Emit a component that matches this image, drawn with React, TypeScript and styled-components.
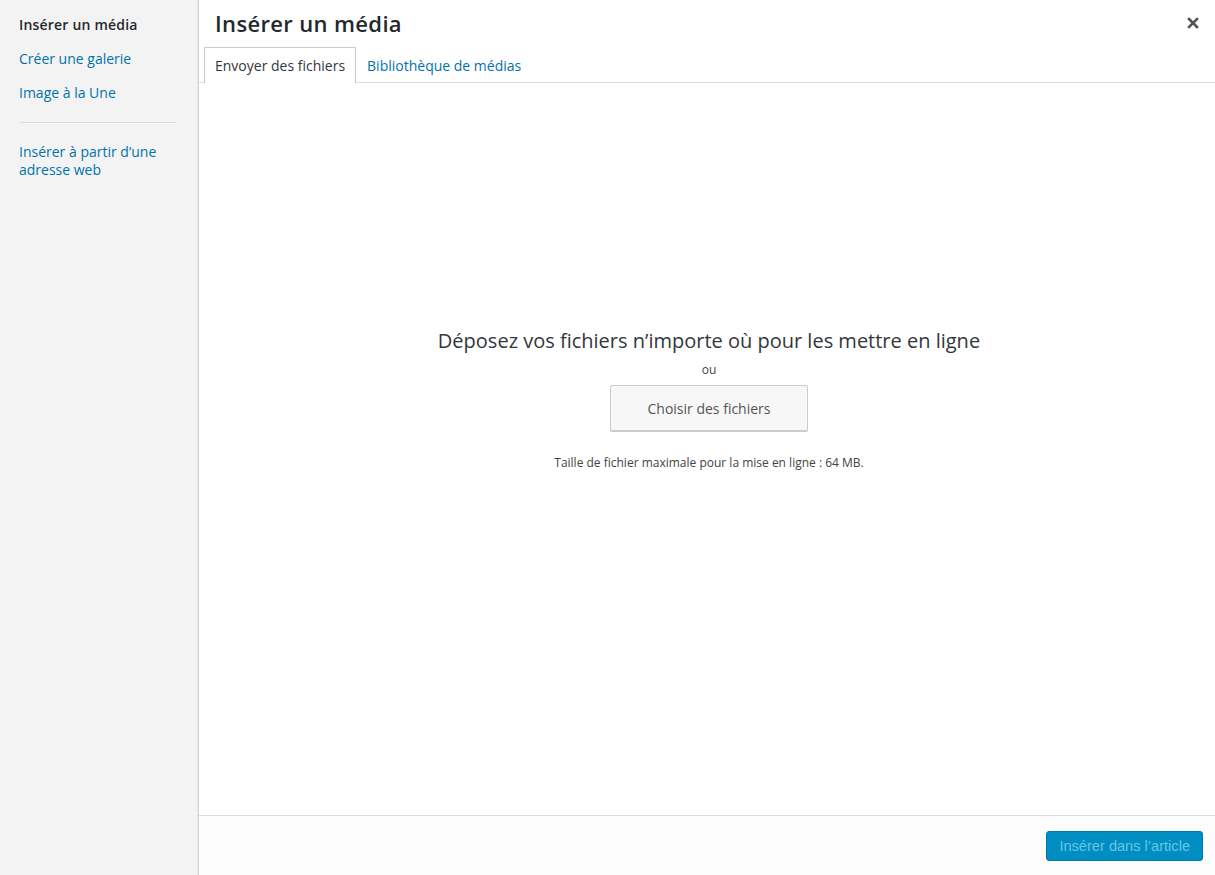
import React from "react";
import styled, { createGlobalStyle } from "styled-components";

const Global = createGlobalStyle`
  html, body { margin: 0; padding: 0; }
  body {
    font-family: "Open Sans", "Noto Sans", sans-serif;
    background: #fff;
    -webkit-font-smoothing: antialiased;
  }
  #root { width: 1215px; height: 875px; }
  * { box-sizing: border-box; }
`;

const Frame = styled.div`
  display: flex;
  width: 1215px;
  height: 875px;
  overflow: hidden;
`;

const Sidebar = styled.nav`
  width: 199px;
  flex: none;
  background: #f3f3f3;
  border-right: 1px solid #d4d4d4;
  box-shadow: inset -5px 0 0 -4px #e8e8e8;
  padding-top: 8px;
  display: flex;
  flex-direction: column;
`;

const MenuItem = styled.a<{ $active?: boolean }>`
  display: block;
  padding: 8px 19px;
  font-size: 14px;
  line-height: 18px;
  letter-spacing: ${(p) => (p.$active ? "0.2px" : "0")};
  color: ${(p) => (p.$active ? "#23282d" : "#0073aa")};
  font-weight: ${(p) => (p.$active ? 600 : 400)};
  text-decoration: none;
`;

const Separator = styled.div`
  height: 1px;
  background: #dddddd;
  margin: 12px 22px 12px 20px;
`;

const Main = styled.div`
  flex: 1;
  display: flex;
  flex-direction: column;
  min-width: 0;
`;

const Header = styled.header`
  height: 47px;
  display: flex;
  align-items: center;
  justify-content: space-between;
  padding: 0 14px 0 16px;
`;

const Title = styled.h1`
  margin: 0;
  font-size: 22px;
  font-weight: 600;
  letter-spacing: 0.35px;
  color: #23282d;
  line-height: 1;
  padding-bottom: 1px;
`;

const Close = styled.button`
  border: none;
  background: none;
  padding: 0;
  width: 16px;
  height: 16px;
  display: flex;
  align-items: center;
  justify-content: center;
  margin-bottom: 1px;
`;

const TabBar = styled.div`
  height: 36px;
  display: flex;
  align-items: flex-end;
  padding: 0 5px;
  border-bottom: 1px solid #dddddd;
`;

const Tab = styled.a<{ $active?: boolean }>`
  display: block;
  padding: 9px 10px 8px;
  font-size: 14px;
  line-height: 18px;
  text-decoration: none;
  color: ${(p) => (p.$active ? "#32373c" : "#0073aa")};
  background: ${(p) => (p.$active ? "#fff" : "transparent")};
  border: 1px solid ${(p) => (p.$active ? "#cccccc" : "transparent")};
  border-bottom: none;
  margin-bottom: -1px;
  height: 36px;
`;

const Content = styled.div`
  flex: 1;
  display: flex;
  flex-direction: column;
  align-items: center;
  padding: 244px 0 0 4px;
`;

const DropTitle = styled.h2`
  margin: 0;
  font-size: 20px;
  line-height: 28px;
  font-weight: 400;
  color: #32373c;
`;

const Or = styled.p`
  margin: 6px 0 0;
  font-size: 12px;
  line-height: 18px;
  color: #444;
`;

const ChooseButton = styled.button`
  margin-top: 6px;
  width: 198px;
  height: 46px;
  border: 1px solid #cccccc;
  border-radius: 2px;
  background: #f7f7f7;
  box-shadow: 0 1px 0 #cccccc;
  font-family: "Open Sans", "Noto Sans", sans-serif;
  font-size: 14px;
  color: #555;
  cursor: pointer;
`;

const MaxSize = styled.p`
  margin: 23px 0 0;
  font-size: 12px;
  line-height: 18px;
  color: #444;
`;

const Footer = styled.footer`
  height: 60px;
  flex: none;
  background: #fcfcfc;
  border-top: 1px solid #dddddd;
  display: flex;
  align-items: center;
  justify-content: flex-end;
  padding: 0 12px 0 0;
`;

const PrimaryButton = styled.button`
  height: 30px;
  padding: 0 12px;
  border: 1px solid #0079ad;
  border-radius: 3px;
  background: #008ec2;
  color: #66c6e4;
  font-family: "Liberation Sans", Arial, sans-serif;
  font-size: 14.6px;
  cursor: default;
`;

export default function App() {
  return (
    <>
      <Global />
      <Frame>
        <Sidebar>
          <MenuItem $active>Insérer un média</MenuItem>
          <MenuItem>Créer une galerie</MenuItem>
          <MenuItem>Image à la Une</MenuItem>
          <Separator />
          <MenuItem>
            Insérer à partir d’une
            <br />
            adresse web
          </MenuItem>
        </Sidebar>
        <Main>
          <Header>
            <Title>Insérer un média</Title>
            <Close aria-label="Fermer">
              <svg width="12" height="12" viewBox="0 0 12 12">
                <path
                  d="M2 2 L10 10 M10 2 L2 10"
                  stroke="#555"
                  strokeWidth="2.6"
                  strokeLinecap="square"
                />
              </svg>
            </Close>
          </Header>
          <TabBar>
            <Tab $active>Envoyer des fichiers</Tab>
            <Tab>Bibliothèque de médias</Tab>
          </TabBar>
          <Content>
            <DropTitle>Déposez vos fichiers n’importe où pour les mettre en ligne</DropTitle>
            <Or>ou</Or>
            <ChooseButton>Choisir des fichiers</ChooseButton>
            <MaxSize>Taille de fichier maximale pour la mise en ligne : 64 MB.</MaxSize>
          </Content>
          <Footer>
            <PrimaryButton>Insérer dans l’article</PrimaryButton>
          </Footer>
        </Main>
      </Frame>
    </>
  );
}
